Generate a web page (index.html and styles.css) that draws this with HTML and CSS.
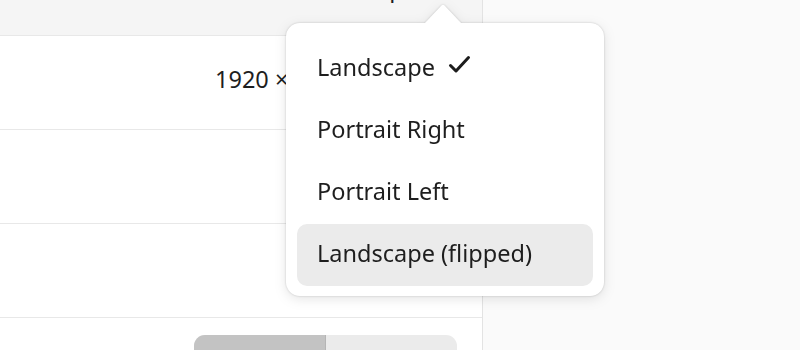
FILE: index.html
```html
<!DOCTYPE html>
<html lang="en">
<head>
<meta charset="utf-8">
<title>Display orientation</title>
<link rel="stylesheet" href="styles.css">
</head>
<body>
<div class="window">
  <div class="main">
    <div class="header">
      <span class="dropdown-label">Landscape</span>
    </div>
    <div class="card">
      <div class="row">
        <span class="value">1920 × 1080 (16∶9)</span>
      </div>
      <div class="row"></div>
      <div class="row"></div>
      <div class="row last">
        <div class="toggle-group">
          <div class="toggle active"></div>
          <div class="toggle"></div>
        </div>
      </div>
    </div>
  </div>
  <div class="side"></div>

  <div class="popover">
    <svg class="arrow" width="40" height="21" viewBox="0 0 40 21" aria-hidden="true">
      <path d="M0 21 L17.5 2.5 Q19 1 20.5 2.5 L38 21 Z" fill="#ffffff"/>
    </svg>
    <div class="menu">
      <div class="item"><span>Landscape</span>
        <svg class="check" width="24" height="20" viewBox="0 0 24 20" aria-hidden="true">
          <path d="M2.5 10.5 L8 16 L20.5 2.5" fill="none" stroke="#1c1c1c" stroke-width="3" stroke-linecap="round" stroke-linejoin="round"/>
        </svg>
      </div>
      <div class="item"><span>Portrait Right</span></div>
      <div class="item"><span>Portrait Left</span></div>
      <div class="item hover"><span>Landscape (flipped)</span></div>
    </div>
  </div>
</div>
</body>
</html>
```

FILE: styles.css
```css
* { box-sizing: border-box; }

html, body {
  margin: 0;
  padding: 0;
}

body {
  width: 800px;
  height: 350px;
  overflow: hidden;
  font-family: "Noto Sans", "Open Sans", sans-serif;
  font-size: 23.5px;
  color: #1e1e1e;
  background: #fafafa;
}

.window {
  position: relative;
  display: flex;
  width: 800px;
  height: 350px;
  overflow: hidden;
}

.main {
  width: 483px;
  height: 350px;
  flex: none;
  display: flex;
  flex-direction: column;
  background: #f5f5f5;
  border-right: 1px solid #e3e3e3;
  overflow: hidden;
}

.side {
  flex: 1;
  background: #fafafa;
}

.header {
  height: 35px;
  flex: none;
  padding-left: 299px;
  overflow: hidden;
}

.dropdown-label {
  display: block;
  line-height: 32px;
  margin-top: -28px;
}

.card {
  flex: 1;
  min-height: 0;
  background: #ffffff;
  border-top: 1px solid #e8e8e8;
  overflow: hidden;
}

.row {
  height: 94px;
  border-bottom: 1px solid #e8e8e8;
  display: flex;
  align-items: center;
  padding-bottom: 8px;
}

.row .value {
  padding-left: 215px;
  white-space: nowrap;
}

.row.last {
  border-bottom: none;
  height: auto;
  align-items: flex-start;
  padding: 17px 0 0 194px;
}

.toggle-group {
  display: flex;
  width: 263px;
  height: 40px;
  border-radius: 11px;
  overflow: hidden;
  background: #ebebeb;
}

.toggle {
  flex: 1;
}

.toggle.active {
  background: #c3c3c3;
  border-right: 1px solid #b5b5b5;
}

.popover {
  position: absolute;
  left: 286px;
  top: 3px;
  width: 318px;
  filter: drop-shadow(0 0 1px rgba(0, 0, 0, 0.18)) drop-shadow(0 3px 6px rgba(0, 0, 0, 0.10));
}

.arrow {
  display: block;
  margin-left: 138px;
  margin-bottom: -1px;
}

.menu {
  background: #ffffff;
  border-radius: 14px;
  padding: 15px 11px 10px 11px;
}

.item {
  height: 62px;
  display: flex;
  align-items: center;
  padding: 0 20px 4px 20px;
  border-radius: 10px;
  gap: 13px;
  white-space: nowrap;
}

.item.hover {
  background: #ebebeb;
}

.check {
  display: block;
  margin-top: -4px;
}
```
